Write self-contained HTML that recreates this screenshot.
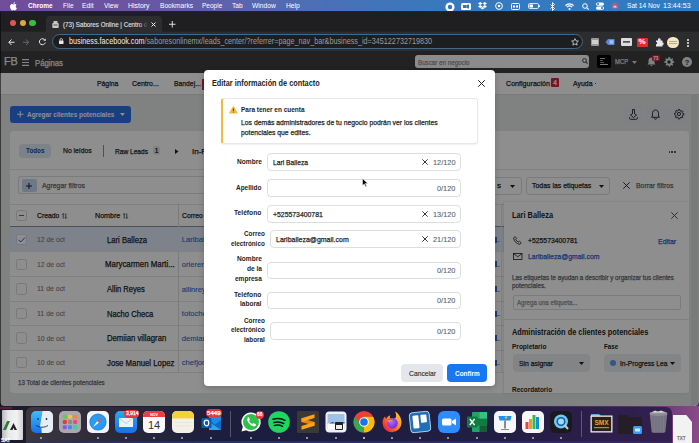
<!DOCTYPE html>
<html><head><meta charset="utf-8">
<style>
*{box-sizing:border-box;margin:0;padding:0}
html,body{width:699px;height:443px;overflow:hidden;background:#3a2f5a;font-family:"Liberation Sans",sans-serif}
.a{position:absolute}
.t{position:absolute;white-space:nowrap;line-height:1;-webkit-text-stroke:0.25px currentColor}
svg{overflow:visible}

</style></head><body>
<div class="a" style="left:0px;top:0px;width:699.00px;height:443.00px;background:linear-gradient(180deg,#2c2446 0%,#3b2b5c 100%)"></div>
<div class="a" style="left:0px;top:0px;width:699.00px;height:11.60px;background:linear-gradient(90deg,#714c9a 0%,#6a55a3 20%,#5d62ac 32%,#4a70b6 46%,#3a78bc 62%,#2e7cc2 100%)"></div>
<svg class="a" style="left:10.3px;top:1.6px;" width="7" height="8.4" viewBox="2.5 0 19.5 24"><path fill="#fff" d="M12.152 6.896c-.948 0-2.415-1.078-3.96-1.04-2.04.027-3.91 1.183-4.961 3.014-2.117 3.675-.546 9.103 1.519 12.09 1.013 1.454 2.208 3.09 3.792 3.039 1.52-.065 2.09-.987 3.935-.987 1.831 0 2.35.987 3.96.948 1.637-.026 2.676-1.48 3.676-2.948 1.156-1.688 1.636-3.325 1.662-3.415-.039-.013-3.182-1.221-3.22-4.857-.026-3.04 2.48-4.494 2.597-4.559-1.429-2.09-3.623-2.324-4.39-2.376-2-.156-3.675 1.09-4.61 1.09zM15.53 3.83c.843-1.012 1.4-2.427 1.245-3.83-1.207.052-2.662.805-3.532 1.818-.78.896-1.454 2.338-1.273 3.714 1.338.104 2.715-.688 3.559-1.701"/></svg>
<div class="t" id="f1" style="left:27.8px;top:1.95px;font-size:7.4px;color:#fff;font-weight:bold;-webkit-text-stroke:0;transform:scaleX(0.8779);transform-origin:0 50%;-webkit-text-stroke:0;">Chrome</div>
<div class="t" id="f2" style="left:62.5px;top:1.95px;font-size:7.4px;color:#fff;transform:scaleX(0.8832);transform-origin:0 50%;-webkit-text-stroke:0;">File</div>
<div class="t" id="f3" style="left:82px;top:1.95px;font-size:7.4px;color:#fff;transform:scaleX(0.9053);transform-origin:0 50%;-webkit-text-stroke:0;">Edit</div>
<div class="t" id="f4" style="left:104.2px;top:1.95px;font-size:7.4px;color:#fff;transform:scaleX(0.9025);transform-origin:0 50%;-webkit-text-stroke:0;">View</div>
<div class="t" id="f5" style="left:128px;top:1.95px;font-size:7.4px;color:#fff;transform:scaleX(0.9375);transform-origin:0 50%;-webkit-text-stroke:0;">History</div>
<div class="t" id="f6" style="left:159.5px;top:1.95px;font-size:7.4px;color:#fff;transform:scaleX(0.8936);transform-origin:0 50%;-webkit-text-stroke:0;">Bookmarks</div>
<div class="t" id="f7" style="left:202px;top:1.95px;font-size:7.4px;color:#fff;transform:scaleX(0.8833);transform-origin:0 50%;-webkit-text-stroke:0;">People</div>
<div class="t" id="f8" style="left:232.3px;top:1.95px;font-size:7.4px;color:#fff;transform:scaleX(0.9009);transform-origin:0 50%;-webkit-text-stroke:0;">Tab</div>
<div class="t" id="f9" style="left:252.4px;top:1.95px;font-size:7.4px;color:#fff;transform:scaleX(0.9028);transform-origin:0 50%;-webkit-text-stroke:0;">Window</div>
<div class="t" id="f10" style="left:286px;top:1.95px;font-size:7.4px;color:#fff;transform:scaleX(0.9039);transform-origin:0 50%;-webkit-text-stroke:0;">Help</div>
<div class="t" id="f11" style="left:626.8px;top:1.95px;font-size:7.4px;color:#fff;transform:scaleX(0.8950);transform-origin:0 50%;-webkit-text-stroke:0;">Sat 14 Nov</div>
<div class="t" id="f12" style="left:663px;top:1.95px;font-size:7.4px;color:#fff;transform:scaleX(0.9581);transform-origin:0 50%;-webkit-text-stroke:0;">13:44:53</div>
<svg class="a" style="left:444.5px;top:2px;" width="8.5" height="8.5" viewBox="0 10 10"><circle cx="5" cy="5" r="4.6" fill="#fff"/><circle cx="5" cy="5" r="2.2" fill="#3a72b6"/></svg>
<svg class="a" style="left:461px;top:2.5px;" width="10" height="7" viewBox="0 10 7"><rect x="0" y="0" width="10" height="7" rx="1.5" fill="#fff"/><path d="M5.5 2.2l2.5-1v4.6l-2.5-1z" fill="#3a72b6"/><rect x="2" y="2" width="3.5" height="3" fill="#3a72b6"/></svg>
<svg class="a" style="left:478px;top:2px;" width="9" height="8" viewBox="0 9 8"><path d="M2.2 0L4.5 1.5 2.2 3 0 1.5zM6.8 0L9 1.5 6.8 3 4.5 1.5zM2.2 3L4.5 4.5 2.2 6 0 4.5zM6.8 3L9 4.5 6.8 6 4.5 4.5zM4.5 5l2 1.300L4.5 7.600 2.500 6.300z" fill="#fff"/></svg>
<svg class="a" style="left:495px;top:2px;" width="8" height="8" viewBox="0 8 8"><circle cx="4" cy="4" r="3.4" fill="none" stroke="#fff" stroke-width="1"/><circle cx="4" cy="4" r="1.3" fill="#fff"/></svg>
<svg class="a" style="left:510.5px;top:2.5px;" width="9" height="7" viewBox="0 9 7"><rect x=".5" y=".5" width="8" height="6" rx="1" fill="none" stroke="#fff" stroke-width="1"/><rect x="2" y="2.5" width="2" height="2" fill="#fff"/><rect x="5" y="2.5" width="2" height="2" fill="#fff"/></svg>
<svg class="a" style="left:527.5px;top:3px;" width="12" height="6" viewBox="0 12 6"><rect x=".5" y=".5" width="10" height="5" rx="1.3" fill="none" stroke="#fff" stroke-opacity=".8" stroke-width="1"/><rect x="1.5" y="1.5" width="3.5" height="3" fill="#fff"/><rect x="11" y="2" width="1" height="2" fill="#fff" fill-opacity=".8"/></svg>
<svg class="a" style="left:549.5px;top:1.5px;" width="5" height="9" viewBox="0 5 9"><path d="M.5 2.5l4 4-2 2V.5l2 2-4 4" fill="none" stroke="#fff" stroke-width=".9"/></svg>
<svg class="a" style="left:565px;top:2.5px;" width="9" height="7" viewBox="0 9 7"><path d="M.3 2.6a6 6 0 0 1 8.4 0M1.8 4.1a3.900 3.900 0 0 1 5.400 0" fill="none" stroke="#fff" stroke-width="1.1"/><circle cx="4.5" cy="6" r="1" fill="#fff"/></svg>
<svg class="a" style="left:581.5px;top:2.5px;" width="7" height="7" viewBox="0 7 7"><circle cx="3" cy="3" r="2.3" fill="none" stroke="#fff" stroke-width="1"/><path d="M4.700 4.700L6.700 6.700" stroke="#fff" stroke-width="1.1"/></svg>
<svg class="a" style="left:596px;top:2px;" width="8" height="8" viewBox="0 8 8"><rect x="0" y=".5" width="8" height="3.2" rx="1.6" fill="#fff"/><rect x="0" y="4.5" width="8" height="3.2" rx="1.6" fill="#fff"/><circle cx="2" cy="2.1" r="1" fill="#3a72b6"/><circle cx="6" cy="6.1" r="1" fill="#3a72b6"/></svg>
<svg class="a" style="left:611px;top:1.8px;" width="8" height="8" viewBox="0 8 8"><circle cx="4" cy="4" r="3.8" fill="#6e6ea8"/><path d="M1 5c1-2 2.500-3 3-3s2 1.500 3 3c-1 .5-2 .3-3 .3S2 5.500 1 5z" fill="#f05a6a"/><path d="M2 5.500c.8-1 1.500-1.500 2-1.500s1.200.5 2 1.500" fill="#fff" fill-opacity=".8"/></svg>
<div class="a" style="left:0px;top:11px;width:699.00px;height:41.00px;background:#232326"></div>
<div class="a" style="left:0px;top:11.6px;width:699.00px;height:19.90px;background:#1f1f22"></div>
<div class="a" style="left:0px;top:11.6px;width:1.20px;height:394.40px;background:#101012"></div>
<div class="a" style="left:9.600000000000001px;top:19.5px;width:6.6px;height:6.6px;border-radius:50%;background:#e0554f"></div>
<div class="a" style="left:19.5px;top:19.5px;width:6.6px;height:6.6px;border-radius:50%;background:#e0a93c"></div>
<div class="a" style="left:29.3px;top:19.5px;width:6.6px;height:6.6px;border-radius:50%;background:#3dbb47"></div>
<div class="a" style="left:45.5px;top:16px;width:116.10px;height:15.50px;background:#2d2d30;border-radius:4px 4px 0 0"></div>
<svg class="a" style="left:51.5px;top:21px;" width="6.5" height="7" viewBox="0 7 7"><rect x=".3" y="2" width="6.4" height="5" rx=".8" fill="#c8c8c8"/><rect x="1.5" y="0" width="4" height="3" rx=".5" fill="#c8c8c8"/><rect x="1.5" y="3.5" width="4" height="1" fill="#555"/></svg>
<div class="t" id="f13" style="left:62.7px;top:21.25px;font-size:7.4px;color:#e4e4e4;transform:scaleX(0.8407);transform-origin:0 50%;-webkit-text-stroke:0.1px currentColor;">(73) Sabores Online | Centro d</div>
<div class="a" style="left:139px;top:18px;width:11.00px;height:12.00px;background:linear-gradient(90deg,rgba(45,45,48,0),#2d2d30 80%)"></div>
<svg class="a" style="left:151.2px;top:22.2px;" width="5" height="5" viewBox="0 5 5"><path d="M.5.5l4 4M4.5.5l-4 4" stroke="#eee" stroke-width="1"/></svg>
<svg class="a" style="left:168.8px;top:21px;" width="6.5" height="6.5" viewBox="0 6.5 6.5"><path d="M3.25 0v6.5M0 3.25h6.5" stroke="#ddd" stroke-width="1"/></svg>
<div class="a" style="left:0px;top:31.5px;width:699.00px;height:19.10px;background:#2d2d30"></div>
<div class="a" style="left:0px;top:31.5px;width:1.20px;height:374.50px;background:#111"></div>
<svg class="a" style="left:7.5px;top:38.5px;" width="6.5" height="6.5" viewBox="0 6.5 6.5"><path d="M6.5 3.25H1M3.5.5L.8 3.25 3.5 6" fill="none" stroke="#e8e8e8" stroke-width="1"/></svg>
<svg class="a" style="left:22.5px;top:38.5px;" width="6.5" height="6.5" viewBox="0 6.5 6.5"><path d="M0 3.25h5.5M3 .5l2.7 2.75L3 6" fill="none" stroke="#6a6a6a" stroke-width="1"/></svg>
<svg class="a" style="left:38.5px;top:38.3px;" width="7" height="7" viewBox="0 7 7"><path d="M6 2.2A3 3 0 1 0 6.3 4.600" fill="none" stroke="#e8e8e8" stroke-width="1"/><path d="M6.700 .5v2.300H4.400z" fill="#e8e8e8"/></svg>
<div class="a" style="left:52.4px;top:34px;width:530.50px;height:14.60px;background:#1e1e21;border:1.4px solid #3f6a8a;border-radius:8px"></div>
<svg class="a" style="left:59px;top:38px;" width="4.5" height="6" viewBox="0 4.5 6"><rect x="0" y="2.5" width="4.5" height="3.5" rx=".5" fill="#e8e8e8"/><path d="M1 2.7V1.800a1.250 1.250 0 0 1 2.500 0v.9" fill="none" stroke="#e8e8e8" stroke-width=".8"/></svg>
<div class="t" id="f14" style="left:68.7px;top:37.64px;font-size:8.2px;color:#f0f0f0;transform:scaleX(0.8823);transform-origin:0 50%;-webkit-text-stroke:0;">business.facebook.com<span style="color:#9b9b9e">/saboresonlinemx/leads_center/?referrer=page_nav_bar&amp;business_id=345122732719830</span></div>
<svg class="a" style="left:571px;top:38.3px;" width="8" height="8" viewBox="0 8 8"><path d="M4 .6l1 2.200 2.400.3-1.800 1.600.5 2.400L4 5.900 1.900 7.100l.5-2.400L.6 3.100 3 2.800z" fill="none" stroke="#ddd" stroke-width=".8"/></svg>
<div class="a" style="left:590.8px;top:37.8px;width:8.00px;height:8.00px;background:#9a9a9a;border-radius:1px"></div>
<div class="a" style="left:592px;top:39.5px;width:5.60px;height:4.50px;background:#cfcfcf"></div>
<svg class="a" style="left:605px;top:37.8px;" width="10" height="8" viewBox="0 10 8"><path d="M3 1h6.5v6H3L.5 4z" fill="#5b86d8"/><rect x="4.5" y="2.2" width="4" height="3.6" fill="#9fc0ff"/></svg>
<div class="a" style="left:621px;top:37.5px;width:10.50px;height:8.50px;background:#dcdcdc;border-radius:1px"></div>
<div class="a" style="left:622.5px;top:40.5px;width:7.50px;height:0.80px;background:#555"></div>
<div class="a" style="left:622.5px;top:42.3px;width:7.50px;height:0.80px;background:#777"></div>
<div class="a" style="left:637px;top:37.5px;width:10.50px;height:9.00px;background:#d9302c;border-radius:1px"></div>
<div class="t" style="left:638.5px;top:38.34px;font-size:8.0px;color:#fff;font-weight:bold;-webkit-text-stroke:0;">%</div>
<svg class="a" style="left:654.5px;top:37.5px;" width="9" height="9" viewBox="0 9 9"><path d="M3 1.5a1.300 1.300 0 0 1 2.600 0V2.500H7.500v2a1.200 1.200 0 0 1 0 2.400V8.500H1V6.300a1.200 1.200 0 0 0 0-2.400V2.500h2z" fill="#e8e8e8"/></svg>
<div class="a" style="left:667px;top:36.5px;width:11.5px;height:11.5px;border-radius:50%;background:#f4e6c8"></div>
<div class="a" style="left:668.5px;top:40.5px;width:8.50px;height:1.50px;background:#e0a83a"></div>
<div class="a" style="left:668.5px;top:43.3px;width:8.50px;height:1.20px;background:#e0a83a"></div>
<div class="a" style="left:687.3px;top:39.3px;width:1.6px;height:1.6px;border-radius:50%;background:#ddd"></div>
<div class="a" style="left:687.3px;top:42.3px;width:1.6px;height:1.6px;border-radius:50%;background:#ddd"></div>
<div class="a" style="left:687.3px;top:45.3px;width:1.6px;height:1.6px;border-radius:50%;background:#ddd"></div>
<div class="a" style="left:0;top:50.6px;width:699px;height:355px;overflow:hidden;border-radius:0 0 5px 5px;background:#e6e9e9">
<div class="a" style="left:0px;top:0.0px;width:699.00px;height:22.40px;background:#3d3d3e"></div>
<div class="t" id="f15" style="left:4.4px;top:6.90px;font-size:10px;color:#f2f2f2;transform:scaleX(1.0836);transform-origin:0 50%;">FB</div>
<svg class="a" style="left:22.4px;top:8.399999999999999px;" width="7" height="7" viewBox="0 7 7"><path d="M0 .7h7M0 3.5h7M0 6.3h7" stroke="#eee" stroke-width="1.2"/></svg>
<div class="t" id="f16" style="left:35px;top:8.13px;font-size:8.4px;color:#eeeeee;transform:scaleX(0.9237);transform-origin:0 50%;">Páginas</div>
<div class="a" style="left:414.8px;top:4.600000000000001px;width:174.10px;height:13.30px;background:#fafafa;border-radius:3px"></div>
<div class="t" id="f17" style="left:417.7px;top:8.16px;font-size:7.2px;color:#909090;transform:scaleX(0.8652);transform-origin:0 50%;">Buscar en negocio</div>
<svg class="a" style="left:582px;top:7.899999999999999px;" width="6" height="6" viewBox="0 6 6"><circle cx="2.500" cy="2.500" r="1.900" fill="none" stroke="#444" stroke-width="1"/><path d="M3.900 3.900L5.600 5.600" stroke="#444" stroke-width="1.1"/></svg>
<div class="a" style="left:597px;top:4.399999999999999px;width:13.70px;height:13.40px;background:#000;border-radius:2px"></div>
<div class="a" style="left:599.5px;top:7.699999999999996px;width:5.50px;height:0.70px;background:#bbb"></div>
<div class="a" style="left:599.5px;top:9.699999999999996px;width:3.50px;height:0.70px;background:#999"></div>
<div class="a" style="left:599.5px;top:11.899999999999999px;width:4.50px;height:0.70px;background:#999"></div>
<div class="a" style="left:599.5px;top:13.899999999999999px;width:8.00px;height:0.80px;background:#ddd"></div>
<div class="t" id="f18" style="left:615px;top:8.47px;font-size:6.6px;color:#dddddd;transform:scaleX(0.9035);transform-origin:0 50%;">MCP</div>
<svg class="a" style="left:631.5px;top:10.199999999999996px;" width="5" height="3" viewBox="0 5 3"><path d="M0 0h5L2.5 3z" fill="#ddd"/></svg>
<svg class="a" style="left:646.5px;top:6.899999999999999px;" width="9" height="10" viewBox="0 9 10"><path d="M4.500 .5c-1.900 0-3 1.500-3 3.200v2.300L.5 7.500h8L7.500 6V3.700C7.500 2 6.400.5 4.500.5zM3.500 8.300h2a1 1 0 0 1-2 0z" fill="#e8e8e8"/></svg>
<div class="a" style="left:652.3px;top:4.399999999999999px;width:8.20px;height:6.50px;background:#e41e3f;border-radius:1.5px"></div>
<div class="t" style="left:653.3px;top:5.91px;font-size:4.6px;color:#fff;">73</div>
<svg class="a" style="left:664.4px;top:6.799999999999997px;" width="10" height="10" viewBox="0 10 10"><path d="M5 0l1 .2.3 1.400.9.4 1.200-.8.8.8-.8 1.200.4.9 1.400.3v1.200l-1.400.3-.4.9.8 1.200-.8.8-1.200-.8-.9.4L6 9.800H4.800l-.3-1.400-.9-.4-1.200.8-.8-.8.8-1.200-.4-.9L.2 5.600V4.400l1.400-.3.4-.9-.8-1.200.8-.8 1.200.8.9-.4L4.400.2z" fill="#e8e8e8"/><circle cx="5" cy="5" r="1.700" fill="#323334"/></svg>
<div class="a" style="left:681.8px;top:6.199999999999996px;width:10.5px;height:10.5px;border-radius:50%;background:#e8e8e8"></div>
<div class="t" style="left:684.6px;top:7.94px;font-size:8.0px;color:#323334;font-weight:bold;-webkit-text-stroke:0;">?</div>
<div class="a" style="left:0px;top:22.4px;width:699.00px;height:22.00px;background:#ffffff;border-bottom:1px solid #dadde1"></div>
<div class="t" id="f19" style="left:97.2px;top:29.34px;font-size:8.0px;color:#1c1e21;transform:scaleX(0.8552);transform-origin:0 50%;">Página</div>
<div class="t" id="f20" style="left:132px;top:29.34px;font-size:8.0px;color:#1c1e21;transform:scaleX(0.8742);transform-origin:0 50%;">Centro...</div>
<div class="t" id="f21" style="left:173.6px;top:29.34px;font-size:8.0px;color:#1c1e21;transform:scaleX(0.8490);transform-origin:0 50%;">Bandej...</div>
<div class="t" id="f22" style="left:505.6px;top:29.34px;font-size:8.0px;color:#1c1e21;transform:scaleX(0.8898);transform-origin:0 50%;">Configuración</div>
<div class="t" id="f23" style="left:573px;top:29.34px;font-size:8.0px;color:#1c1e21;transform:scaleX(0.8658);transform-origin:0 50%;">Ayuda</div>
<div class="a" style="left:202px;top:28.9px;width:2.00px;height:10.50px;background:#e41e3f"></div>
<div class="a" style="left:551.3px;top:27.9px;width:7.60px;height:8.80px;background:#e41e3f;border-radius:1px"></div>
<div class="t" style="left:553.2px;top:29.47px;font-size:6.6px;color:#fff;">4</div>
<div class="a" style="left:594.8px;top:32.4px;width:1.50px;height:1.50px;background:#1c1e21;border-radius:50%"></div>
<div class="a" style="left:10px;top:55.4px;width:121.00px;height:17.00px;background:#2c73e8;border-radius:3px"></div>
<svg class="a" style="left:16.5px;top:60.4px;" width="6.5" height="6.5" viewBox="0 6.5 6.5"><path d="M3.25 0v6.5M0 3.25h6.5" stroke="#fff" stroke-width="1"/></svg>
<div class="t" id="f24" style="left:27.2px;top:60.24px;font-size:8.0px;color:#fff;font-weight:bold;-webkit-text-stroke:0;transform:scaleX(0.8012);transform-origin:0 50%;">Agregar clientes potenciales</div>
<svg class="a" style="left:120px;top:62.9px;" width="5" height="3" viewBox="0 5 3"><path d="M0 0h5L2.5 3z" fill="#fff"/></svg>
<div class="a" style="left:623px;top:55.4px;width:20.00px;height:17.00px;background:#e4e6eb;border-radius:3px"></div>
<div class="a" style="left:645.5px;top:55.4px;width:20.00px;height:17.00px;background:#e4e6eb;border-radius:3px"></div>
<div class="a" style="left:668px;top:55.4px;width:20.00px;height:17.00px;background:#e4e6eb;border-radius:3px"></div>
<svg class="a" style="left:628.5px;top:58.4px;" width="9" height="11" viewBox="0 9 11"><path d="M3.500 .5h2v4.300l2 1.200L4.500 8.500 1.500 6l2-1.200z" fill="none" stroke="#1c1e21" stroke-width=".9" stroke-linejoin="round"/><path d="M.6 8.200v1.100c0 .6.4 1 1 1h5.800c.6 0 1-.4 1-1V8.200" fill="none" stroke="#1c1e21" stroke-width=".9"/></svg>
<svg class="a" style="left:651px;top:58.199999999999996px;" width="9" height="11" viewBox="0 9 11"><path d="M4.500 1c-2 0-3 1.600-3 3.400V7L.6 8.300h7.800L7.500 7V4.400C7.500 2.600 6.500 1 4.500 1zM3.500 9.300a1 1 0 0 0 2 0" fill="none" stroke="#1c1e21" stroke-width=".9"/></svg>
<svg class="a" style="left:673.5px;top:58.9px;" width="9" height="9" viewBox="0 10 10"><path d="M5 .5l.9.2.3 1.300.9.4 1.100-.7.7.7-.7 1.100.4.9 1.300.3v1.200l-1.300.3-.4.9.7 1.100-.7.7-1.100-.7-.9.4-.3 1.300H4.400l-.3-1.300-.9-.4-1.100.7-.7-.7.7-1.100-.4-.9L.5 5.600V4.400l1.300-.3.4-.9-.7-1.100.7-.7 1.100.7.9-.4.3-1.300z" fill="none" stroke="#1c1e21" stroke-width=".9"/><circle cx="5" cy="5" r="1.600" fill="none" stroke="#1c1e21" stroke-width=".9"/></svg>
<div class="a" style="left:691px;top:44.4px;width:7.00px;height:311.00px;background:#d9dcdc"></div>
<div class="a" style="left:10px;top:80.4px;width:679.00px;height:262.00px;background:#fff;border-radius:4px"></div>
<div class="a" style="left:19.4px;top:93.0px;width:31.80px;height:14.60px;background:#e1eaf7;border-radius:4px"></div>
<div class="t" id="f25" style="left:25.5px;top:96.74px;font-size:8.0px;color:#0f4aa8;font-weight:bold;-webkit-text-stroke:0;transform:scaleX(0.7892);transform-origin:0 50%;">Todos</div>
<div class="t" id="f26" style="left:62.9px;top:96.74px;font-size:8.0px;color:#1c1e21;transform:scaleX(0.8465);transform-origin:0 50%;">No leídos</div>
<div class="a" style="left:102.8px;top:94.4px;width:0.90px;height:12.50px;background:#8d949e"></div>
<div class="t" id="f27" style="left:115.4px;top:96.94px;font-size:8.0px;color:#1c1e21;transform:scaleX(0.8242);transform-origin:0 50%;">Raw Leads</div>
<div class="a" style="left:153.3px;top:95.9px;width:6.30px;height:9.00px;background:#e4e6eb;border-radius:3px"></div>
<div class="t" style="left:154.8px;top:97.77px;font-size:6.4px;color:#1c1e21;font-weight:bold;-webkit-text-stroke:0;">1</div>
<svg class="a" style="left:175px;top:98.0px;" width="3.5" height="5" viewBox="0 3.5 5"><path d="M0 0l3.5 2.5L0 5z" fill="#1c1e21"/></svg>
<div class="t" id="f28" style="left:191.8px;top:96.94px;font-size:8.0px;color:#1c1e21;transform:scaleX(0.9949);transform-origin:0 50%;">In-P</div>
<div class="a" style="left:668.5px;top:100.6px;width:1.50px;height:1.50px;background:#444;border-radius:50%"></div>
<div class="a" style="left:671.3px;top:100.6px;width:1.50px;height:1.50px;background:#444;border-radius:50%"></div>
<div class="a" style="left:674.1px;top:100.6px;width:1.50px;height:1.50px;background:#444;border-radius:50%"></div>
<div class="a" style="left:10px;top:118.70000000000002px;width:679.00px;height:1.00px;background:#e4e6eb"></div>
<div class="a" style="left:17.7px;top:125.6px;width:462.30px;height:18.30px;border:1px solid #dadde1;border-right:none;border-radius:3px 0 0 3px"></div>
<div class="a" style="left:21.7px;top:128.20000000000002px;width:14.90px;height:13.40px;background:#c6d7f2;border-radius:2px"></div>
<svg class="a" style="left:26.2px;top:132.0px;" width="6" height="6" viewBox="0 6 6"><path d="M3 0v6M0 3h6" stroke="#1c1e21" stroke-width="1"/></svg>
<div class="t" id="f29" style="left:42.3px;top:131.34px;font-size:8.0px;color:#65676b;transform:scaleX(0.8619);transform-origin:0 50%;">Agregar filtros</div>
<div class="a" style="left:480px;top:126.70000000000002px;width:41.90px;height:17.50px;border:1px solid #dadde1;border-radius:3px"></div>
<div class="t" style="left:497px;top:131.74px;font-size:8.0px;color:#1c1e21;">s</div>
<svg class="a" style="left:509.5px;top:134.4px;" width="5" height="3" viewBox="0 5 3"><path d="M0 0h5L2.5 3z" fill="#1c1e21"/></svg>
<div class="a" style="left:525.6px;top:126.70000000000002px;width:84.70px;height:17.50px;border:1px solid #dadde1;border-radius:3px"></div>
<div class="t" id="f30" style="left:532px;top:131.74px;font-size:8.0px;color:#1c1e21;transform:scaleX(0.8645);transform-origin:0 50%;">Todas las etiquetas</div>
<svg class="a" style="left:598.5px;top:134.4px;" width="5" height="3" viewBox="0 5 3"><path d="M0 0h5L2.5 3z" fill="#1c1e21"/></svg>
<svg class="a" style="left:623.4px;top:131.70000000000002px;" width="7.3" height="7.3" viewBox="0 7 7"><path d="M.3.3l6.4 6.4M6.7.3L.3 6.7" stroke="#1c1e21" stroke-width=".9"/></svg>
<div class="t" id="f31" style="left:636px;top:131.74px;font-size:8.0px;color:#65676b;transform:scaleX(0.8612);transform-origin:0 50%;">Borrar filtros</div>
<div class="a" style="left:10px;top:153.1px;width:679.00px;height:1.00px;background:#e4e6eb"></div>
<div class="a" style="left:10px;top:175.70000000000002px;width:679.00px;height:1.00px;background:#8d949e"></div>
<div class="a" style="left:178px;top:153.1px;width:1.00px;height:168.30px;background:#dadde1"></div>
<div class="a" style="left:16px;top:159.4px;width:11.00px;height:11.40px;background:#fff;border:1px solid #d4d7db;border-radius:2.5px"></div>
<div class="a" style="left:18.8px;top:164.6px;width:5.40px;height:1.00px;background:#65676b"></div>
<div class="t" id="f32" style="left:36.8px;top:161.54px;font-size:8.0px;color:#1c1e21;transform:scaleX(0.8538);transform-origin:0 50%;">Creado</div>
<div class="t" id="f33" style="left:94.7px;top:161.54px;font-size:8.0px;color:#1c1e21;transform:scaleX(0.8904);transform-origin:0 50%;">Nombre</div>
<div class="t" id="f34" style="left:181.6px;top:161.34px;font-size:8.0px;color:#1c1e21;transform:scaleX(0.8511);transform-origin:0 50%;">Correo</div>
<svg class="a" style="left:62.3px;top:162.20000000000002px;" width="5" height="6" viewBox="0 5 6"><path d="M1.200 5.600V.6M.2 1.600L1.200.6l1 1M3.800.4v5M2.800 4.400l1 1 1-1" fill="none" stroke="#1c1e21" stroke-width=".7"/></svg>
<svg class="a" style="left:123px;top:162.20000000000002px;" width="5" height="6" viewBox="0 5 6"><path d="M1.200 5.600V.6M.2 1.600L1.200.6l1 1M3.800.4v5M2.800 4.400l1 1 1-1" fill="none" stroke="#1c1e21" stroke-width=".7"/></svg>
<div class="a" style="left:10px;top:176.70000000000002px;width:679.00px;height:24.60px;background:#e3ecfa"></div>
<div class="a" style="left:16px;top:183.50000000000003px;width:11.00px;height:11.40px;background:#fff;border:1px solid #d4d7db;border-radius:2.5px"></div>
<svg class="a" style="left:17.8px;top:186.20000000000002px;" width="7.5" height="5.5" viewBox="0 7.5 5.5"><path d="M.5 2.800l2.200 2.200L7 .5" fill="none" stroke="#1a5fd0" stroke-width="1"/></svg>
<div class="t" id="f35" style="left:37.2px;top:185.64px;font-size:7.8px;color:#7a7d82;transform:scaleX(0.8732);transform-origin:0 50%;-webkit-text-stroke:0.1px currentColor;">12 de oct</div>
<div class="t" id="f36" style="left:106.8px;top:185.23px;font-size:8.6px;color:#1c1e21;transform:scaleX(0.8915);transform-origin:0 50%;">Lari Balleza</div>
<div class="a" style="left:495.2px;top:186.20000000000002px;width:1.60px;height:6.00px;background:#3a70c8"></div>
<div class="a" style="left:496.8px;top:190.8px;width:3.20px;height:0.60px;background:#a0b4dc"></div>
<div class="t" style="left:181.8px;top:185.75px;font-size:7.6px;color:#2a6ad0;-webkit-text-stroke:0.1px currentColor;">Lariball</div>
<div class="a" style="left:10px;top:200.8px;width:679.00px;height:1.00px;background:#e4e6eb"></div>
<div class="a" style="left:16px;top:208.1px;width:11.00px;height:11.40px;background:#fff;border:1px solid #d4d7db;border-radius:2.5px"></div>
<div class="t" id="f37" style="left:37.2px;top:210.24px;font-size:7.8px;color:#7a7d82;transform:scaleX(0.8732);transform-origin:0 50%;-webkit-text-stroke:0.1px currentColor;">12 de oct</div>
<div class="t" id="f38" style="left:104.7px;top:209.83px;font-size:8.6px;color:#1c1e21;transform:scaleX(0.9129);transform-origin:0 50%;">Marycarmen Marti...</div>
<div class="a" style="left:495.2px;top:210.79999999999998px;width:1.60px;height:6.00px;background:#3a70c8"></div>
<div class="a" style="left:496.8px;top:215.4px;width:3.20px;height:0.60px;background:#a0b4dc"></div>
<div class="t" style="left:181.8px;top:210.35px;font-size:7.6px;color:#2a6ad0;-webkit-text-stroke:0.1px currentColor;">orierere</div>
<div class="a" style="left:10px;top:225.4px;width:679.00px;height:1.00px;background:#e4e6eb"></div>
<div class="a" style="left:16px;top:232.70000000000002px;width:11.00px;height:11.40px;background:#fff;border:1px solid #d4d7db;border-radius:2.5px"></div>
<div class="t" id="f39" style="left:37.2px;top:234.84px;font-size:7.8px;color:#7a7d82;transform:scaleX(0.8900);transform-origin:0 50%;-webkit-text-stroke:0.1px currentColor;">11 de oct</div>
<div class="t" id="f40" style="left:107px;top:234.43px;font-size:8.6px;color:#1c1e21;transform:scaleX(0.8773);transform-origin:0 50%;">Allin Reyes</div>
<div class="a" style="left:495.2px;top:235.4px;width:1.60px;height:6.00px;background:#3a70c8"></div>
<div class="a" style="left:496.8px;top:240.00000000000003px;width:3.20px;height:0.60px;background:#a0b4dc"></div>
<div class="t" style="left:181.8px;top:234.95px;font-size:7.6px;color:#2a6ad0;-webkit-text-stroke:0.1px currentColor;">allinrey</div>
<div class="a" style="left:10px;top:250.00000000000003px;width:679.00px;height:1.00px;background:#e4e6eb"></div>
<div class="a" style="left:16px;top:257.3px;width:11.00px;height:11.40px;background:#fff;border:1px solid #d4d7db;border-radius:2.5px"></div>
<div class="t" id="f41" style="left:37.2px;top:259.44px;font-size:7.8px;color:#7a7d82;transform:scaleX(0.8900);transform-origin:0 50%;-webkit-text-stroke:0.1px currentColor;">11 de oct</div>
<div class="t" id="f42" style="left:107px;top:259.03px;font-size:8.6px;color:#1c1e21;transform:scaleX(0.8878);transform-origin:0 50%;">Nacho Checa</div>
<div class="a" style="left:495.2px;top:260.0px;width:1.60px;height:6.00px;background:#3a70c8"></div>
<div class="a" style="left:496.8px;top:264.6px;width:3.20px;height:0.60px;background:#a0b4dc"></div>
<div class="t" style="left:181.8px;top:259.55px;font-size:7.6px;color:#2a6ad0;-webkit-text-stroke:0.1px currentColor;">totoche</div>
<div class="a" style="left:10px;top:274.6px;width:679.00px;height:1.00px;background:#e4e6eb"></div>
<div class="a" style="left:16px;top:281.90000000000003px;width:11.00px;height:11.40px;background:#fff;border:1px solid #d4d7db;border-radius:2.5px"></div>
<div class="t" id="f43" style="left:37.2px;top:284.04px;font-size:7.8px;color:#7a7d82;transform:scaleX(0.8732);transform-origin:0 50%;-webkit-text-stroke:0.1px currentColor;">10 de oct</div>
<div class="t" id="f44" style="left:107px;top:283.63px;font-size:8.6px;color:#1c1e21;transform:scaleX(0.8986);transform-origin:0 50%;">Demiian villagran</div>
<div class="a" style="left:495.2px;top:284.6px;width:1.60px;height:6.00px;background:#3a70c8"></div>
<div class="a" style="left:496.8px;top:289.20000000000005px;width:3.20px;height:0.60px;background:#a0b4dc"></div>
<div class="t" style="left:181.8px;top:284.15px;font-size:7.6px;color:#2a6ad0;-webkit-text-stroke:0.1px currentColor;">demian</div>
<div class="a" style="left:10px;top:299.2px;width:679.00px;height:1.00px;background:#e4e6eb"></div>
<div class="a" style="left:16px;top:306.5px;width:11.00px;height:11.40px;background:#fff;border:1px solid #d4d7db;border-radius:2.5px"></div>
<div class="t" id="f45" style="left:37.2px;top:308.64px;font-size:7.8px;color:#7a7d82;transform:scaleX(0.8732);transform-origin:0 50%;-webkit-text-stroke:0.1px currentColor;">10 de oct</div>
<div class="t" id="f46" style="left:107px;top:308.23px;font-size:8.6px;color:#1c1e21;transform:scaleX(0.9049);transform-origin:0 50%;">Jose Manuel Lopez</div>
<div class="a" style="left:495.2px;top:309.2px;width:1.60px;height:6.00px;background:#3a70c8"></div>
<div class="a" style="left:496.8px;top:313.8px;width:3.20px;height:0.60px;background:#a0b4dc"></div>
<div class="t" style="left:181.8px;top:308.75px;font-size:7.6px;color:#2a6ad0;-webkit-text-stroke:0.1px currentColor;">chefjon</div>
<div class="a" style="left:10px;top:321.4px;width:679.00px;height:1.00px;background:#e4e6eb"></div>
<div class="a" style="left:501px;top:153.1px;width:1.00px;height:168.30px;background:#e4e6eb"></div>
<div class="t" id="f47" style="left:17.5px;top:328.26px;font-size:7.0px;color:#65676b;transform:scaleX(0.8926);transform-origin:0 50%;">13 Total de clientes potenciales</div>
<div class="a" style="left:504.3px;top:151.4px;width:184.70px;height:191.00px;background:#ffffff;box-shadow:-1px 0 3px rgba(0,0,0,.12);border-radius:0 0 4px 0"></div>
<div class="t" id="f48" style="left:512.2px;top:160.82px;font-size:8.8px;color:#1c1e21;font-weight:bold;-webkit-text-stroke:0;transform:scaleX(0.8384);transform-origin:0 50%;">Lari Balleza</div>
<svg class="a" style="left:671px;top:161.4px;" width="7" height="7" viewBox="0 7 7"><path d="M.3.3l6.4 6.4M6.7.3L.3 6.7" stroke="#444" stroke-width=".9"/></svg>
<svg class="a" style="left:512.8px;top:185.9px;" width="9" height="9" viewBox="0 9 9"><path d="M2 .6l1.600 1.800-.9 1.200c.5 1 1.400 1.900 2.500 2.500l1.200-.9L8.200 6.800 7 8.300C3.600 8 .9 5.300.6 2z" fill="none" stroke="#1c1e21" stroke-width=".8"/></svg>
<div class="t" id="f49" style="left:527.9px;top:186.64px;font-size:8.0px;color:#1c1e21;transform:scaleX(0.8528);transform-origin:0 50%;">+525573400781</div>
<div class="t" id="f50" style="left:658px;top:187.34px;font-size:8.0px;color:#1a5fd0;transform:scaleX(0.8668);transform-origin:0 50%;">Editar</div>
<svg class="a" style="left:512.5px;top:202.0px;" width="9.5" height="7" viewBox="0 9.5 7"><rect x=".5" y=".5" width="8.5" height="6" fill="none" stroke="#1c1e21" stroke-width=".8"/><path d="M.5.5l4.250 3.300L9 .5" fill="none" stroke="#1c1e21" stroke-width=".8"/></svg>
<div class="t" id="f51" style="left:527.9px;top:202.14px;font-size:8.0px;color:#1a5fd0;transform:scaleX(0.8576);transform-origin:0 50%;">Lariballeza@gmail.com</div>
<div class="t" id="f52" style="left:512.2px;top:224.36px;font-size:6.8px;color:#65676b;transform:scaleX(0.9158);transform-origin:0 50%;">Las etiquetas te ayudan a describir y organizar tus clientes</div>
<div class="t" id="f53" style="left:512.2px;top:232.36px;font-size:6.8px;color:#65676b;transform:scaleX(0.9333);transform-origin:0 50%;">potenciales.</div>
<div class="a" style="left:512.5px;top:244.6px;width:168.80px;height:15.10px;border:1px solid #dadde1;border-radius:2px"></div>
<div class="t" id="f54" style="left:517px;top:249.36px;font-size:6.8px;color:#8d949e;transform:scaleX(0.9036);transform-origin:0 50%;">Agrega una etiqueta...</div>
<div class="a" style="left:504.3px;top:268.4px;width:184.70px;height:1.00px;background:#e4e6eb"></div>
<div class="t" id="f55" style="left:512.2px;top:277.22px;font-size:8.8px;color:#1c1e21;font-weight:bold;-webkit-text-stroke:0;transform:scaleX(0.8373);transform-origin:0 50%;">Administración de clientes potenciales</div>
<div class="t" id="f56" style="left:512.2px;top:292.24px;font-size:7.8px;color:#1c1e21;font-weight:bold;-webkit-text-stroke:0;transform:scaleX(0.8356);transform-origin:0 50%;">Propietario</div>
<div class="t" id="f57" style="left:603.9px;top:292.24px;font-size:7.8px;color:#1c1e21;font-weight:bold;-webkit-text-stroke:0;transform:scaleX(0.7974);transform-origin:0 50%;">Fase</div>
<div class="a" style="left:512.8px;top:303.4px;width:77.70px;height:18.00px;background:#eceef1;border-radius:4px"></div>
<div class="t" id="f58" style="left:518.5px;top:309.34px;font-size:7.8px;color:#1c1e21;transform:scaleX(0.8721);transform-origin:0 50%;">Sin asignar</div>
<svg class="a" style="left:578.5px;top:311.7px;" width="5" height="3" viewBox="0 5 3"><path d="M0 0h5L2.5 3z" fill="#1c1e21"/></svg>
<div class="a" style="left:604px;top:303.4px;width:76.80px;height:18.00px;background:#eceef1;border-radius:4px"></div>
<div class="a" style="left:610px;top:309.7px;width:6px;height:6px;border-radius:50%;background:#5a9bf5"></div>
<div class="t" id="f59" style="left:619.6px;top:309.34px;font-size:7.8px;color:#1c1e21;transform:scaleX(0.8545);transform-origin:0 50%;">In-Progress Lea</div>
<svg class="a" style="left:669.5px;top:311.7px;" width="5" height="3" viewBox="0 5 3"><path d="M0 0h5L2.5 3z" fill="#1c1e21"/></svg>
<div class="t" id="f60" style="left:512.2px;top:334.94px;font-size:7.8px;color:#1c1e21;font-weight:bold;-webkit-text-stroke:0;transform:scaleX(0.8262);transform-origin:0 50%;">Recordatorio</div>
<div class="a" style="left:0;top:0;width:699px;height:356px;background:rgba(0,0,0,0.445)"></div>
</div>
<div class="a" style="left:0px;top:50.6px;width:1.00px;height:354.40px;background:rgba(0,0,0,.55)"></div>
<div class="a" style="left:204px;top:70.3px;width:291.00px;height:315.70px;background:#fff;border-radius:4px;box-shadow:0 2px 6px rgba(0,0,0,.2)"></div>
<div class="t" id="f61" style="left:211.5px;top:79.33px;font-size:8.4px;color:#1c1e21;font-weight:bold;-webkit-text-stroke:0;transform:scaleX(0.8726);transform-origin:0 50%;">Editar información de contacto</div>
<svg class="a" style="left:478px;top:80.2px;" width="7" height="7" viewBox="0 7 7"><path d="M.3.3l6.4 6.4M6.7.3L.3 6.7" stroke="#1c1e21" stroke-width="1"/></svg>
<div class="a" style="left:221px;top:98px;width:257.00px;height:45.50px;border:1px solid #e6e8eb;border-left:2px solid #f2b93b;border-radius:3px;box-shadow:0 1px 1.5px rgba(0,0,0,.06)"></div>
<svg class="a" style="left:228.6px;top:105.6px;" width="8.8" height="7.6" viewBox="0 8.8 7.6"><path d="M4.400 .3c.2 0 .4.1.5.3l3.800 6.300c.2.3 0 .7-.4.7H.5c-.4 0-.6-.4-.4-.7L3.900.6c.1-.2.300-.3.500-.3z" fill="#f2b93b"/><path d="M4.400 2.500v2.500M4.400 5.700v.7" stroke="#1c1e21" stroke-width=".8"/></svg>
<div class="t" id="f62" style="left:240.7px;top:106.04px;font-size:7.8px;color:#1c1e21;font-weight:bold;-webkit-text-stroke:0;transform:scaleX(0.8278);transform-origin:0 50%;">Para tener en cuenta</div>
<div class="t" id="f63" style="left:240.7px;top:119.14px;font-size:7.8px;color:#1c1e21;transform:scaleX(0.8742);transform-origin:0 50%;">Los demás administradores de tu negocio podrán ver los clientes</div>
<div class="t" id="f64" style="left:240.7px;top:128.74px;font-size:7.8px;color:#1c1e21;transform:scaleX(0.8716);transform-origin:0 50%;">potenciales que edites.</div>
<div class="t" id="f65" style="left:236.6px;top:157.99px;font-size:7.9px;color:#1c1e21;font-weight:bold;-webkit-text-stroke:0;transform:scaleX(0.8348);transform-origin:0 50%;">Nombre</div>
<div class="a" style="left:267px;top:153px;width:194.00px;height:18.00px;border:1px solid #dadde1;border-radius:4px"></div>
<div class="t" id="f66" style="left:272.6px;top:158.94px;font-size:7.8px;color:#1c1e21;transform:scaleX(0.8618);transform-origin:0 50%;">Lari Balleza</div>
<svg class="a" style="left:421.5px;top:159.0px;" width="6" height="6" viewBox="0 6 6"><path d="M.3.3l5.4 5.4M5.7.3L.3 5.7" stroke="#1c1e21" stroke-width=".9"/></svg>
<div class="t" id="f67" style="left:432.6px;top:159.05px;font-size:7.6px;color:#606368;transform:scaleX(0.9720);transform-origin:0 50%;-webkit-text-stroke:0.1px currentColor;">12/120</div>
<div class="t" id="f68" style="left:236.1px;top:184.09px;font-size:7.9px;color:#1c1e21;font-weight:bold;-webkit-text-stroke:0;transform:scaleX(0.8157);transform-origin:0 50%;">Apellido</div>
<div class="a" style="left:267px;top:179px;width:194.00px;height:18.00px;border:1px solid #dadde1;border-radius:4px"></div>
<div class="t" id="f69" style="left:436.8px;top:185.05px;font-size:7.6px;color:#606368;transform:scaleX(0.9665);transform-origin:0 50%;-webkit-text-stroke:0.1px currentColor;">0/120</div>
<div class="t" id="f70" style="left:234.2px;top:209.39px;font-size:7.9px;color:#1c1e21;font-weight:bold;-webkit-text-stroke:0;transform:scaleX(0.8455);transform-origin:0 50%;">Teléfono</div>
<div class="a" style="left:267px;top:205px;width:194.00px;height:18.00px;border:1px solid #dadde1;border-radius:4px"></div>
<div class="t" id="f71" style="left:272.6px;top:210.94px;font-size:7.8px;color:#1c1e21;transform:scaleX(0.8805);transform-origin:0 50%;">+525573400781</div>
<svg class="a" style="left:421.5px;top:211.0px;" width="6" height="6" viewBox="0 6 6"><path d="M.3.3l5.4 5.4M5.7.3L.3 5.7" stroke="#1c1e21" stroke-width=".9"/></svg>
<div class="t" id="f72" style="left:432.6px;top:211.05px;font-size:7.6px;color:#606368;transform:scaleX(0.9720);transform-origin:0 50%;-webkit-text-stroke:0.1px currentColor;">13/120</div>
<div class="t" id="f73" style="left:243.7px;top:229.79px;font-size:7.9px;color:#1c1e21;font-weight:bold;-webkit-text-stroke:0;transform:scaleX(0.8032);transform-origin:0 50%;">Correo</div>
<div class="t" id="f74" style="left:230.7px;top:239.59px;font-size:7.9px;color:#1c1e21;font-weight:bold;-webkit-text-stroke:0;transform:scaleX(0.8022);transform-origin:0 50%;">electrónico</div>
<div class="a" style="left:270px;top:230px;width:191.00px;height:18.00px;border:1px solid #dadde1;border-radius:4px"></div>
<div class="t" id="f75" style="left:275.6px;top:235.94px;font-size:7.8px;color:#1c1e21;transform:scaleX(0.8963);transform-origin:0 50%;">Lariballeza@gmail.com</div>
<svg class="a" style="left:421.5px;top:236.0px;" width="6" height="6" viewBox="0 6 6"><path d="M.3.3l5.4 5.4M5.7.3L.3 5.7" stroke="#1c1e21" stroke-width=".9"/></svg>
<div class="t" id="f76" style="left:432.6px;top:236.05px;font-size:7.6px;color:#606368;transform:scaleX(0.9720);transform-origin:0 50%;-webkit-text-stroke:0.1px currentColor;">21/120</div>
<div class="t" id="f77" style="left:236.6px;top:255.29px;font-size:7.9px;color:#1c1e21;font-weight:bold;-webkit-text-stroke:0;transform:scaleX(0.8348);transform-origin:0 50%;">Nombre</div>
<div class="t" id="f78" style="left:246.5px;top:265.09px;font-size:7.9px;color:#1c1e21;font-weight:bold;-webkit-text-stroke:0;transform:scaleX(0.8341);transform-origin:0 50%;">de la</div>
<div class="t" id="f79" style="left:234.7px;top:274.89px;font-size:7.9px;color:#1c1e21;font-weight:bold;-webkit-text-stroke:0;transform:scaleX(0.8252);transform-origin:0 50%;">empresa</div>
<div class="a" style="left:267px;top:261.6px;width:194.00px;height:17.00px;border:1px solid #dadde1;border-radius:4px"></div>
<div class="t" id="f80" style="left:436.8px;top:267.15px;font-size:7.6px;color:#606368;transform:scaleX(0.9665);transform-origin:0 50%;-webkit-text-stroke:0.1px currentColor;">0/120</div>
<div class="t" id="f81" style="left:234.2px;top:290.69px;font-size:7.9px;color:#1c1e21;font-weight:bold;-webkit-text-stroke:0;transform:scaleX(0.8455);transform-origin:0 50%;">Teléfono</div>
<div class="t" id="f82" style="left:240.1px;top:300.49px;font-size:7.9px;color:#1c1e21;font-weight:bold;-webkit-text-stroke:0;transform:scaleX(0.8269);transform-origin:0 50%;">laboral</div>
<div class="a" style="left:267px;top:291.7px;width:194.00px;height:17.30px;border:1px solid #dadde1;border-radius:4px"></div>
<div class="t" id="f83" style="left:436.8px;top:297.40px;font-size:7.6px;color:#606368;transform:scaleX(0.9665);transform-origin:0 50%;-webkit-text-stroke:0.1px currentColor;">0/120</div>
<div class="t" id="f84" style="left:243.7px;top:316.69px;font-size:7.9px;color:#1c1e21;font-weight:bold;-webkit-text-stroke:0;transform:scaleX(0.8032);transform-origin:0 50%;">Correo</div>
<div class="t" id="f85" style="left:230.7px;top:326.49px;font-size:7.9px;color:#1c1e21;font-weight:bold;-webkit-text-stroke:0;transform:scaleX(0.8022);transform-origin:0 50%;">electrónico</div>
<div class="t" id="f86" style="left:243.7px;top:336.29px;font-size:7.9px;color:#1c1e21;font-weight:bold;-webkit-text-stroke:0;transform:scaleX(0.8032);transform-origin:0 50%;">laboral</div>
<div class="a" style="left:270px;top:322px;width:191.00px;height:17.50px;border:1px solid #dadde1;border-radius:4px"></div>
<div class="t" id="f87" style="left:436.8px;top:327.80px;font-size:7.6px;color:#606368;transform:scaleX(0.9665);transform-origin:0 50%;-webkit-text-stroke:0.1px currentColor;">0/120</div>
<div class="a" style="left:401px;top:364px;width:41.70px;height:17.70px;background:#e4e6eb;border-radius:4px"></div>
<div class="t" id="f88" style="left:408.8px;top:369.54px;font-size:7.8px;color:#1c1e21;transform:scaleX(0.8659);transform-origin:0 50%;-webkit-text-stroke:0.1px currentColor;">Cancelar</div>
<div class="a" style="left:447px;top:364px;width:40.30px;height:17.70px;background:#1877f2;border-radius:4px"></div>
<div class="t" id="f89" style="left:455px;top:369.54px;font-size:7.8px;color:#fff;font-weight:bold;-webkit-text-stroke:0;transform:scaleX(0.8262);transform-origin:0 50%;">Confirm</div>
<svg class="a" style="left:361.5px;top:177.5px;" width="6" height="9" viewBox="0 6 9"><path d="M.5.5v7l1.800-1.600 1.300 2.800 1-.5L3.300 5.500H5.800z" fill="#000" stroke="#fff" stroke-width=".5"/></svg>
<div class="a" style="left:0px;top:406px;width:699.00px;height:37.00px;background:linear-gradient(90deg,#1c1a2c 0%,#1e1c3a 40%,#2a2350 70%,#5a3470 92%,#8a4a88 100%)"></div>
<div class="a" style="left:2px;top:409.5px;width:21.00px;height:30.50px;background:linear-gradient(90deg,#b8b8b8,#e8e8e8 30%,#f2f2f2 70%,#d0d0d0);border-radius:1px"></div>
<svg class="a" style="left:2.5px;top:420.5px;" width="10.5" height="7.5" viewBox="0 14 9"><path d="M0 9L4 0h3L3 9z" fill="#2e7a3a"/><path d="M7 9l3.500-7L14 9h-2.500l-1-2.200L9.500 9z" fill="#222"/></svg>
<div class="a" style="left:0px;top:407px;width:12.00px;height:2.00px;background:#5a2030"></div>
<div class="t" style="left:1px;top:438.40px;font-size:5.0px;color:#fff;">SAT</div>
<div class="a" style="left:673px;top:415px;width:19.00px;height:28.00px;background:#f2f2f2;clip-path:polygon(0 0,70% 0,100% 25%,100% 100%,0 100%)"></div>
<div class="t" style="left:677px;top:437.16px;font-size:4.5px;color:#777;">TXT</div>
<div class="a" style="left:25.7px;top:407px;width:646.60px;height:43.00px;background:linear-gradient(90deg,rgba(62,56,64,.96) 0%,rgba(46,42,58,.96) 12%,rgba(28,30,62,.96) 30%,rgba(32,30,66,.96) 70%,rgba(50,30,78,.96) 100%);border-radius:6px 6px 0 0"></div>
<div class="a" style="left:229.8px;top:411px;width:0.80px;height:26.00px;background:rgba(255,255,255,.25)"></div>
<div class="a" style="left:25.7px;top:440.5px;width:646.60px;height:2.50px;background:linear-gradient(90deg,rgba(40,48,100,.5),rgba(40,50,110,.9) 30%,rgba(50,40,110,.9) 80%,rgba(60,40,100,.6))"></div>
<div class="a" style="left:581.2px;top:411px;width:0.80px;height:26.00px;background:rgba(255,255,255,.25)"></div>
<svg class="a" style="left:30.499999999999996px;top:411.3px;" width="21.6" height="21.6" viewBox="0 22 22"><defs><linearGradient id="fd" x1="0" x2="0" y1="0" y2="1"><stop offset="0" stop-color="#36c1f8"/><stop offset="1" stop-color="#1a6ee8"/></linearGradient></defs><rect width="22" height="22" rx="5" fill="url(#fd)"/><path d="M11.500 0H17a5 5 0 0 1 5 5v12a5 5 0 0 1-5 5h-6.200c-.3-1.500-.4-3.500-.3-5.500H9c.2-3 .9-6.500 2.500-16.500z" fill="#e9eef5"/><circle cx="7" cy="8" r=".9" fill="#13335a"/><circle cx="15.500" cy="8" r=".9" fill="#13335a"/><path d="M5 14.500c3.500 2.300 8.500 2.300 12 0" fill="none" stroke="#13335a" stroke-width=".9"/></svg>
<svg class="a" style="left:58.7px;top:411.3px;" width="21.6" height="21.6" viewBox="0 22 22"><rect width="22" height="22" rx="5" fill="#a9a8ae"/><rect x="3.8" y="3.8" width="4" height="4" rx="1.200" fill="#5ad04d"/><rect x="9.0" y="3.8" width="4" height="4" rx="1.200" fill="#f6c33a"/><rect x="14.2" y="3.8" width="4" height="4" rx="1.200" fill="#f28a32"/><rect x="3.8" y="9.0" width="4" height="4" rx="1.200" fill="#e63b3b"/><rect x="9.0" y="9.0" width="4" height="4" rx="1.200" fill="#8a8a90"/><rect x="14.2" y="9.0" width="4" height="4" rx="1.200" fill="#e94a7a"/><rect x="3.8" y="14.2" width="4" height="4" rx="1.200" fill="#9b4ee0"/><rect x="9.0" y="14.2" width="4" height="4" rx="1.200" fill="#3a8ee8"/><rect x="14.2" y="14.2" width="4" height="4" rx="1.200" fill="#3bd0a0"/></svg>
<div class="a" style="left:40.3px;top:437.3px;width:2px;height:2px;border-radius:50%;background:#b8b8c8"></div>
<div class="a" style="left:96.7px;top:437.3px;width:2px;height:2px;border-radius:50%;background:#b8b8c8"></div>
<svg class="a" style="left:86.9px;top:411.3px;" width="21.6" height="21.6" viewBox="0 22 22"><rect width="22" height="22" rx="5" fill="#f4f4f6"/><circle cx="11" cy="11" r="8.600" fill="#1e88ea"/><circle cx="11" cy="11" r="7.600" fill="#2d9af2"/><path d="M16 6l-4.200 5.800-1.600-1.600z" fill="#f34a45"/><path d="M6 16l4.200-5.800 1.600 1.600z" fill="#fff"/></svg>
<div class="a" style="left:124.9px;top:437.3px;width:2px;height:2px;border-radius:50%;background:#b8b8c8"></div>
<svg class="a" style="left:115.10000000000001px;top:411.3px;" width="21.6" height="21.6" viewBox="0 22 22"><defs><linearGradient id="ml" x1="0" x2="0" y1="0" y2="1"><stop offset="0" stop-color="#2aa8f8"/><stop offset="1" stop-color="#1a6ee8"/></linearGradient></defs><rect width="22" height="22" rx="5" fill="url(#ml)"/><rect x="4" y="7" width="14" height="9" fill="#eef2f7"/><path d="M4 7l7 5.500L18 7" fill="none" stroke="#b8c4d4" stroke-width=".8"/></svg>
<div class="a" style="left:124.4px;top:409.5px;width:14.599999999999994px;height:8px;border-radius:4px;background:#e8333a"></div>
<div class="t" id="f90" style="left:125.60000000000001px;top:411.40px;font-size:5.2px;color:#fff;transform:scaleX(0.9690);transform-origin:0 50%;">3,914</div>
<div class="a" style="left:153.1px;top:437.3px;width:2px;height:2px;border-radius:50%;background:#b8b8c8"></div>
<svg class="a" style="left:143.29999999999998px;top:411.3px;" width="21.6" height="21.6" viewBox="0 22 22"><rect width="22" height="22" rx="5" fill="#fafafa"/><path d="M0 5a5 5 0 0 1 5-5h12a5 5 0 0 1 5 5v1H0z" fill="#ef3d3d"/><text x="11" y="5" font-size="3.800" fill="#fff" text-anchor="middle" font-family="Liberation Sans" font-weight="bold">NOV</text><text x="11" y="18.200" font-size="11" fill="#333" text-anchor="middle" font-family="Liberation Sans">14</text></svg>
<div class="a" style="left:181.3px;top:437.3px;width:2px;height:2px;border-radius:50%;background:#b8b8c8"></div>
<svg class="a" style="left:171.5px;top:411.3px;" width="21.6" height="21.6" viewBox="0 22 22"><rect width="22" height="22" rx="5" fill="#f3f0e8"/><path d="M0 5a5 5 0 0 1 5-5h12a5 5 0 0 1 5 5v2.500H0z" fill="#f8cf3a"/><path d="M3 11.500h16M3 15h16" stroke="#dcd8cc" stroke-width=".5"/></svg>
<div class="a" style="left:209.5px;top:437.3px;width:2px;height:2px;border-radius:50%;background:#b8b8c8"></div>
<svg class="a" style="left:199.7px;top:411.3px;" width="21.6" height="21.6" viewBox="0 22 22"><path d="M9 5h12v13H9z" fill="#1490df"/><path d="M9 9l6 4.500L21 9v10H9z" fill="#0f6cbd"/><path d="M9 11l12 8H9z" fill="#28a8ea"/><rect x="1.500" y="7" width="10" height="10" rx="1" fill="#0a5ca8"/><ellipse cx="6.500" cy="12" rx="2.300" ry="2.800" fill="none" stroke="#fff" stroke-width="1.200"/></svg>
<div class="a" style="left:206px;top:409px;width:15.5px;height:8px;border-radius:4px;background:#e8333a"></div>
<div class="t" id="f91" style="left:207.2px;top:410.90px;font-size:5.2px;color:#fff;transform:scaleX(1.1785);transform-origin:0 50%;">5449</div>
<div class="a" style="left:250px;top:437.3px;width:2px;height:2px;border-radius:50%;background:#b8b8c8"></div>
<svg class="a" style="left:240.2px;top:411.3px;" width="21.6" height="21.6" viewBox="0 22 22"><path d="M11 1.500a9.500 9.500 0 0 0-8.200 14.300L1.500 20.500l4.900-1.300A9.500 9.500 0 1 0 11 1.500z" fill="#fff"/><circle cx="11" cy="11" r="8" fill="#2fc04e"/><path d="M7.500 6.500c.5-.5 1-.4 1.300.1l1 1.800c.2.400 0 .8-.3 1.100-.4.300-.4.600-.1 1 .7 1 1.400 1.700 2.400 2.300.4.200.7.2 1-.2.300-.4.700-.5 1.100-.3l1.800.9c.5.3.5.8.1 1.300-.8.900-2 1.200-3.200.6-2.300-1.100-4-2.800-5.100-5.100-.5-1.100-.3-2.400.5-3.100z" fill="#fff"/></svg>
<div class="a" style="left:256px;top:410.5px;width:7.5px;height:8px;border-radius:4px;background:#e8333a"></div>
<div class="t" id="f92" style="left:257.2px;top:412.40px;font-size:5.2px;color:#fff;transform:scaleX(0.9457);transform-origin:0 50%;">66</div>
<div class="a" style="left:278.2px;top:437.3px;width:2px;height:2px;border-radius:50%;background:#b8b8c8"></div>
<svg class="a" style="left:268.4px;top:411.3px;" width="21.6" height="21.6" viewBox="0 22 22"><circle cx="11" cy="11" r="10.800" fill="#1ed760"/><path d="M5 8.300c4-1.300 8.500-1 12 1M5.800 11.500c3.300-1 7-.7 10 1M6.500 14.500c2.700-.7 5.500-.5 8 .8" fill="none" stroke="#111" stroke-width="1.500" stroke-linecap="round"/></svg>
<div class="a" style="left:306.4px;top:437.3px;width:2px;height:2px;border-radius:50%;background:#b8b8c8"></div>
<svg class="a" style="left:296.59999999999997px;top:411.3px;" width="21.6" height="21.6" viewBox="0 22 22"><rect width="22" height="22" rx="1" fill="#3a3936"/><path d="M4.500 7.300L17.500 11v3.700L4.500 11z" fill="#e8850f"/><path d="M4.500 7.300L17.500 3.300v3.800L4.500 11z" fill="#fba21d"/><path d="M4.500 15L17.500 11v3.700L4.500 18.700z" fill="#fba21d"/></svg>
<div class="a" style="left:334.6px;top:437.3px;width:2px;height:2px;border-radius:50%;background:#b8b8c8"></div>
<svg class="a" style="left:324.8px;top:411.3px;" width="21.6" height="21.6" viewBox="0 22 22"><rect x=".5" y=".5" width="21" height="21" rx="4" fill="#eef2f8"/><rect x="2.500" y="3" width="17" height="15" fill="#9ec3ea"/><rect x="2.500" y="12" width="17" height="6" fill="#fff"/><path d="M2.500 13l5-2 4 2 8-2v1.500h-17z" fill="#2a4a7a"/><rect x="10" y="11" width="8" height="8" rx="1" fill="#222"/><rect x="11" y="14" width="6" height="4" fill="#eee"/></svg>
<div class="a" style="left:362.8px;top:437.3px;width:2px;height:2px;border-radius:50%;background:#b8b8c8"></div>
<svg class="a" style="left:353.0px;top:411.3px;" width="21.6" height="21.6" viewBox="0 22 22"><circle cx="11" cy="11" r="10.500" fill="#e94235"/><path d="M11 11L1.900 5.750A10.500 10.500 0 0 0 11 21.500z" fill="#34a853"/><path d="M11 11H21.500a10.500 10.500 0 0 0-1.400-5.250L11 5.500 11 11zM11 11l0 10.500A10.500 10.500 0 0 0 20.100 5.750z" fill="#fbbc04"/><path d="M11 5.500h9.100A10.500 10.500 0 0 0 1.900 5.750L5.500 11z" fill="#e94235"/><circle cx="11" cy="11" r="4.800" fill="#fff"/><circle cx="11" cy="11" r="3.800" fill="#1a73e8"/></svg>
<div class="a" style="left:391px;top:437.3px;width:2px;height:2px;border-radius:50%;background:#b8b8c8"></div>
<svg class="a" style="left:381.2px;top:411.3px;" width="21.6" height="21.6" viewBox="0 22 22"><defs><linearGradient id="ffa" x1="1" y1="0" x2="0" y2="1"><stop offset="0" stop-color="#ffd43a"/><stop offset=".45" stop-color="#ff8a1a"/><stop offset=".8" stop-color="#f5303a"/><stop offset="1" stop-color="#e8256a"/></linearGradient><radialGradient id="ffp" cx=".4" cy=".35" r=".7"><stop offset="0" stop-color="#b56cff"/><stop offset="1" stop-color="#6a2ad0"/></radialGradient></defs><path d="M14 .5c3.500 2 6.500 6 6.500 11A9.500 9.500 0 0 1 1.500 12C1.500 9 2.800 6.500 4 5.500c.2 1 .6 1.800 1.200 2.300C6 6 7.500 4.700 9.300 4.500 8.500 6 9 7.200 10 7.800 11.500 8.500 13.500 8 14.800 6.500 15.500 4.500 15 2.500 14 .5z" fill="url(#ffa)"/><circle cx="11.500" cy="12.300" r="5.200" fill="url(#ffp)"/><path d="M6.500 10c1.500-1 3.500-1.200 5-.5-1.500.3-2.500 1-3 2z" fill="#ff9a2a"/></svg>
<div class="a" style="left:419.2px;top:437.3px;width:2px;height:2px;border-radius:50%;background:#b8b8c8"></div>
<svg class="a" style="left:409.4px;top:411.3px;" width="21.6" height="21.6" viewBox="0 22 22"><g transform="rotate(-6 11 11)"><rect x="1" y="1" width="20" height="20" rx="3" fill="#1f6fb8" stroke="#cfe3f5" stroke-width=".8"/><rect x="4" y="4" width="6" height="13" rx="1" fill="#fff"/><rect x="12" y="4" width="6" height="8" rx="1" fill="#fff"/></g></svg>
<div class="a" style="left:447.4px;top:437.3px;width:2px;height:2px;border-radius:50%;background:#b8b8c8"></div>
<svg class="a" style="left:437.59999999999997px;top:411.3px;" width="21.6" height="21.6" viewBox="0 22 22"><rect width="22" height="22" rx="6" fill="#2d8cff"/><rect x="4" y="7.500" width="9.500" height="7" rx="1.500" fill="#fff"/><path d="M14 10l4-2.500v7L14 12z" fill="#fff"/></svg>
<div class="a" style="left:475.6px;top:437.3px;width:2px;height:2px;border-radius:50%;background:#b8b8c8"></div>
<svg class="a" style="left:465.8px;top:411.3px;" width="21.6" height="21.6" viewBox="0 22 22"><rect x="6" y="1" width="15" height="20" rx="1" fill="#21a366"/><rect x="6" y="7.500" width="15" height="7" fill="#107c41"/><rect x="13.500" y="1" width="7.500" height="6.500" fill="#33c481"/><rect x="13.500" y="14.500" width="7.500" height="6.500" fill="#185c37"/><rect x="1" y="5.500" width="10.500" height="11" rx="1" fill="#107c41"/><path d="M3.800 8l4.800 6M8.600 8l-4.800 6" stroke="#fff" stroke-width="1.300"/></svg>
<div class="a" style="left:503.8px;top:437.3px;width:2px;height:2px;border-radius:50%;background:#b8b8c8"></div>
<svg class="a" style="left:494.0px;top:411.3px;" width="21.6" height="21.6" viewBox="0 22 22"><rect width="22" height="22" rx="5" fill="#f6f6f8"/><path d="M4.500 5h13l-1 4.500h-11z" fill="#1f8ff0"/><rect x="10" y="9.500" width="2" height="8" fill="#8a8a8a"/><path d="M7 18.500h8" stroke="#8a8a8a" stroke-width="1"/><circle cx="12" cy="6.500" r="1.200" fill="#f5b13a"/></svg>
<div class="a" style="left:532px;top:437.3px;width:2px;height:2px;border-radius:50%;background:#b8b8c8"></div>
<svg class="a" style="left:522.2px;top:411.3px;" width="21.6" height="21.6" viewBox="0 22 22"><rect width="22" height="22" rx="5" fill="#f6f6f8"/><rect x="3.500" y="11" width="3" height="7" fill="#e8453c"/><rect x="7" y="8" width="3" height="10" fill="#f39c1a"/><rect x="10.500" y="4" width="3" height="14" fill="#2ebd4e"/><rect x="14" y="6" width="3" height="12" fill="#1e88e5"/></svg>
<div class="a" style="left:560.2px;top:437.3px;width:2px;height:2px;border-radius:50%;background:#b8b8c8"></div>
<svg class="a" style="left:550.4000000000001px;top:411.3px;" width="21.6" height="21.6" viewBox="0 22 22"><rect width="22" height="22" rx="5" fill="#1a1a1e"/><circle cx="11" cy="10.500" r="7" fill="#6fc8f5"/><circle cx="11" cy="10.500" r="4.500" fill="#1e5a9a"/><circle cx="11" cy="10.500" r="3" fill="#9adcff"/><path d="M14.500 14l3.500 4" stroke="#c8c8d0" stroke-width="2"/></svg>
<div class="a" style="left:362.8px;top:437.3px;width:2px;height:2px;border-radius:50%;background:#b8b8c8"></div>
<svg class="a" style="left:589.8px;top:413px;" width="23" height="20" viewBox="0 23 20"><path d="M1 1h8l2 2h11v2H1z" fill="#5aa8e8"/><rect x=".5" y="2.500" width="22" height="17" fill="#eee"/><rect x="1.800" y="3.800" width="19.400" height="14.400" fill="#2a2218"/><text x="11.500" y="12" font-size="6.500" fill="#f0a030" text-anchor="middle" font-family="Liberation Sans" font-weight="bold">SMX</text><rect x="4" y="14" width="15" height="1.200" fill="#c08a30"/></svg>
<svg class="a" style="left:617.7px;top:413px;" width="24" height="21" viewBox="0 24 21"><path d="M0 2h9l2 2h13v17H0z" fill="#231e28"/><rect x="15" y="13" width="9" height="8" rx="1.500" fill="#3a9cf0"/><rect x="17" y="15.500" width="5" height="3" fill="#cfe6ff"/></svg>
<svg class="a" style="left:648.5px;top:410px;" width="19" height="23" viewBox="0 19 23"><ellipse cx="9.500" cy="3.500" rx="9" ry="2.500" fill="#9a9aa2"/><path d="M.8 3.800h17.400l-1.800 17.500c-.1.900-1 1.500-2 1.500H4.600c-1 0-1.900-.6-2-1.500z" fill="#8a8a92" fill-opacity=".85"/><path d="M4 6v15M7 6v15.500M10 6v15.500M13 6v15.500M16 6l-.3 15" stroke="#6a6a72" stroke-width=".6"/><path d="M3 2.500l3-2 3 1.500 3-1.500 4 2" fill="#ddd"/></svg>
</body></html>
